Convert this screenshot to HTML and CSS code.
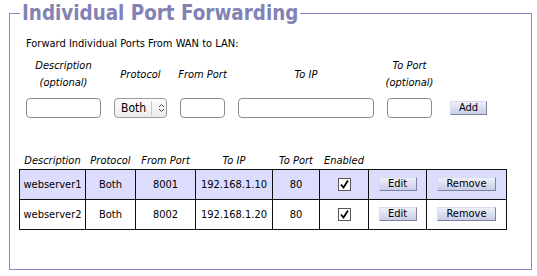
FILE: index.html
```html
<!DOCTYPE html>
<html lang="en">
<head>
    <meta charset="UTF-8">
    <title>Individual Port Forwarding</title>
    <link rel="stylesheet" href="styles.css">
</head>
<body>
    <fieldset class="panel">
        <legend class="panel-title">Individual Port Forwarding</legend>
        <p class="intro">Forward Individual Ports From WAN to LAN:</p>

        <div class="add-form">
            <span class="field-label">Description<br>(optional)</span>
            <span class="field-label">Protocol</span>
            <span class="field-label">From Port</span>
            <span class="field-label">To IP</span>
            <span class="field-label">To Port<br>(optional)</span>
            <span></span>

            <input type="text" class="text-input desc-input">
            <span class="select">
                <span class="select-value">Both</span>
                <span class="select-arrows">
                    <svg width="7" height="10" viewBox="0 0 7 10">
                        <path d="M1 4 L3.5 1.5 L6 4 M1 6 L3.5 8.5 L6 6" fill="none" stroke="#444" stroke-width="1"/>
                    </svg>
                </span>
            </span>
            <input type="text" class="text-input port-input">
            <input type="text" class="text-input ip-input">
            <input type="text" class="text-input port-input">
            <button type="button" class="btn add-btn">Add</button>
        </div>

        <table class="rules">
            <thead>
                <tr>
                    <th class="col-desc">Description</th>
                    <th class="col-proto">Protocol</th>
                    <th class="col-from">From Port</th>
                    <th class="col-ip">To IP</th>
                    <th class="col-to">To Port</th>
                    <th class="col-enabled">Enabled</th>
                    <th class="col-edit"></th>
                    <th class="col-remove"></th>
                </tr>
            </thead>
            <tbody>
                <tr class="row-alt">
                    <td>webserver1</td>
                    <td>Both</td>
                    <td>8001</td>
                    <td>192.168.1.10</td>
                    <td>80</td>
                    <td><span class="check"><svg width="11" height="11" viewBox="0 0 11 11"><path d="M2 5.5 L4.5 8.5 L9 1.5" fill="none" stroke="#000" stroke-width="1.8"/></svg></span></td>
                    <td><button type="button" class="btn edit-btn">Edit</button></td>
                    <td><button type="button" class="btn remove-btn">Remove</button></td>
                </tr>
                <tr>
                    <td>webserver2</td>
                    <td>Both</td>
                    <td>8002</td>
                    <td>192.168.1.20</td>
                    <td>80</td>
                    <td><span class="check"><svg width="11" height="11" viewBox="0 0 11 11"><path d="M2 5.5 L4.5 8.5 L9 1.5" fill="none" stroke="#000" stroke-width="1.8"/></svg></span></td>
                    <td><button type="button" class="btn edit-btn">Edit</button></td>
                    <td><button type="button" class="btn remove-btn">Remove</button></td>
                </tr>
            </tbody>
        </table>
    </fieldset>
</body>
</html>
```

FILE: styles.css
```css
* {
    box-sizing: border-box;
}

body {
    margin: 0;
    background-color: #ffffff;
    font-family: 'DejaVu Sans Condensed', 'DejaVu Sans', sans-serif;
    font-size: 11px;
    color: #000;
}

.panel {
    margin: 1px 0 0 9px;
    width: 523px;
    height: 269px;
    padding: 0 0 0 16px;
    border: 1px solid #8888c8;
}

.panel-title {
    padding: 0 2px;
    margin-left: -6px;
    font-size: 20.4px;
    line-height: 24px;
    font-weight: bold;
    color: #8282b4;
}

.intro {
    margin: 12px 0 0 0;
    line-height: 13px;
}

.add-form {
    display: grid;
    grid-template-columns: 75px 53px 45px 136px 45px 37px;
    grid-template-rows: 36px 20px;
    column-gap: 13px;
    row-gap: 6px;
    margin-top: 6px;
    align-items: center;
}

.field-label {
    font-style: italic;
    text-align: center;
    line-height: 17px;
    white-space: nowrap;
    justify-self: center;
}

.text-input {
    height: 20px;
    border: 1px solid #8d8d8d;
    border-radius: 4px;
    background: #fff;
    margin: 0;
}

.desc-input { width: 75px; }
.port-input { width: 45px; }
.ip-input { width: 136px; }

.select {
    display: flex;
    align-items: center;
    height: 20px;
    border: 1px solid #9a9a9a;
    border-radius: 4px;
    background: linear-gradient(#fdfdfd, #ececec);
    font-size: 12px;
}

.select-value {
    padding-left: 6px;
    padding-right: 5px;
    border-right: 1px solid #c8c8c8;
    line-height: 14px;
}

.select-arrows {
    display: flex;
    padding-left: 6px;
}

.btn {
    margin: 0;
    padding: 0;
    height: 14px;
    border: 1px solid;
    border-color: #d8dcef #7d81a0 #7d81a0 #d8dcef;
    border-radius: 0;
    background: linear-gradient(#eef0fb, #c9cde6);
    font-family: 'DejaVu Sans Condensed', 'DejaVu Sans', sans-serif;
    font-size: 11px;
    line-height: 12px;
    color: #000;
}

.add-btn {
    width: 37px;
    margin-left: 5px;
    align-self: center;
}

.rules {
    margin: 34px 0 0 -7px;
    border-collapse: collapse;
    font-size: 11px;
}

.rules th {
    font-weight: normal;
    font-style: italic;
    font-size: 11px;
    height: 17px;
    padding: 0;
    vertical-align: middle;
    text-align: center;
}

.rules td {
    height: 30px;
    padding: 0;
    border: 1px solid #111;
    text-align: center;
}

.row-alt td {
    background-color: #dcdcfc;
}

.col-desc { width: 66px; }
.col-proto { width: 50px; }
.col-from { width: 60px; }
.col-ip { width: 77px; }
.col-to { width: 47px; }
.col-enabled { width: 49px; }
.col-edit { width: 58px; }
.col-remove { width: 80px; }

.check {
    display: inline-flex;
    width: 13px;
    height: 13px;
    border: 1px solid #555;
    background: #fff;
    align-items: center;
    justify-content: center;
    vertical-align: middle;
}

.edit-btn { width: 38px; }
.remove-btn { width: 59px; }
```
